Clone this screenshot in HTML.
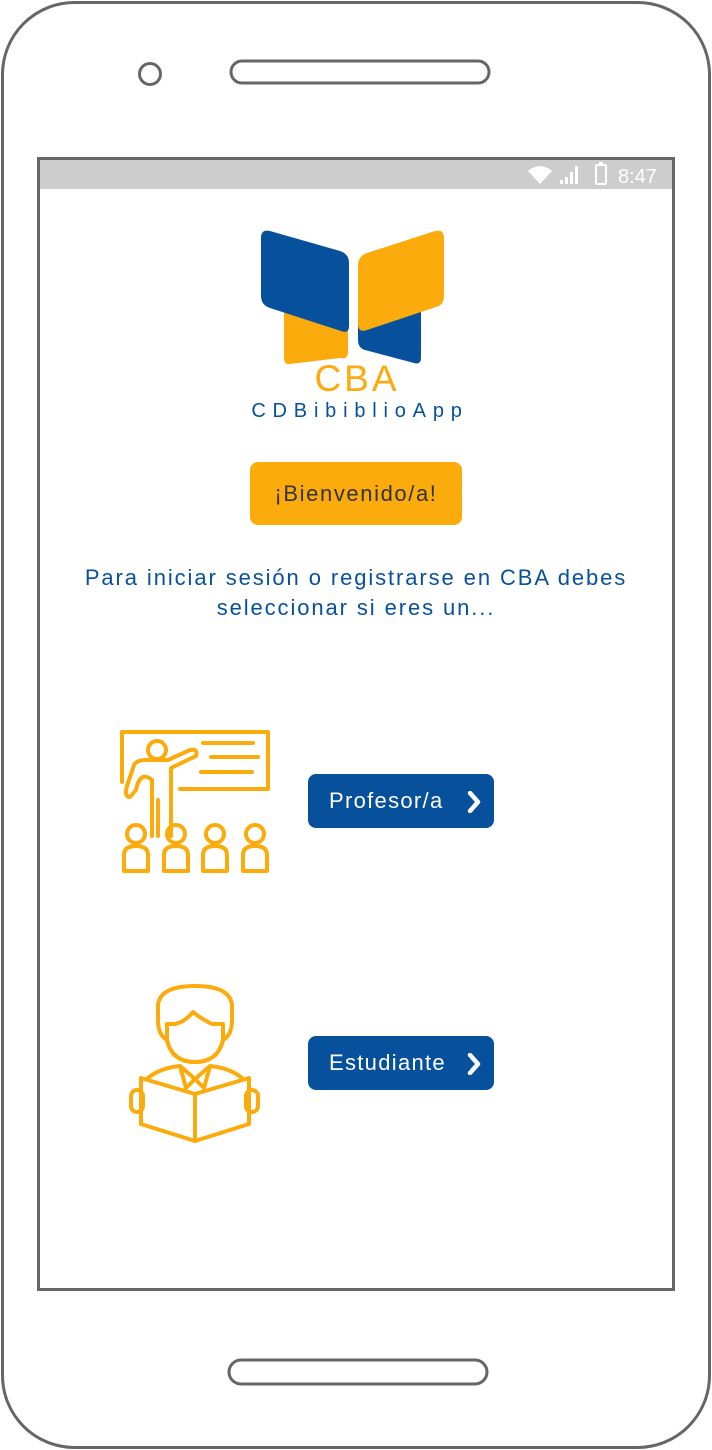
<!DOCTYPE html>
<html><head><meta charset="utf-8"><style>
body{margin:0;width:712px;height:1450px;background:#fff;position:relative;overflow:hidden;font-family:"Liberation Sans",sans-serif}
.abs{position:absolute}
.btn{position:absolute;background:#07509c;color:#fff;border-radius:8px;font-size:22px;line-height:54px;padding-left:21px;box-sizing:border-box;letter-spacing:1.3px}
.btn svg{position:absolute;right:10px;top:17px}
</style></head><body>
<svg class="abs" style="left:0;top:0" width="712" height="1450">
<rect x="2.5" y="2.5" width="707" height="1445" rx="72" fill="none" stroke="#666" stroke-width="3"/>
<circle cx="150" cy="74" r="10.5" fill="none" stroke="#666" stroke-width="3"/>
<rect x="231" y="61" width="258" height="22" rx="11" fill="none" stroke="#666" stroke-width="3"/>
<rect x="229" y="1360" width="258" height="24" rx="12" fill="none" stroke="#666" stroke-width="3"/>
<rect x="38.5" y="158.5" width="635" height="1131" fill="none" stroke="#666" stroke-width="3"/>
<rect x="40" y="160" width="632" height="29" fill="#cdcdcd"/>
<path d="M528 171 Q540 161 552 171 L540 184Z" fill="#fff"/>
<rect x="560" y="180" width="3" height="4" fill="#fff"/><rect x="565" y="177" width="3" height="7" fill="#fff"/><rect x="570" y="172" width="3" height="12" fill="#fff"/><rect x="575" y="166" width="3" height="18" fill="#fff"/>
<rect x="596" y="165" width="10" height="19" rx="1" fill="none" stroke="#fff" stroke-width="2"/><rect x="599" y="162" width="4" height="3" fill="#fff"/>
<text x="618" y="183" font-size="20" fill="#fff" font-family="Liberation Sans">8:47</text>
<path d="M284 300 L348 318 L348 352 Q348 360 340 358 L290 364 Q284 365 284 358Z" fill="#fbab0b"/>
<path d="M358 320 L421 304 L421 358 Q421 365 414 363 L365 350 Q358 348 358 340Z" fill="#07509c"/>
<path d="M261 238 Q261 229 270 231 L340 251 Q349 254 349 263 L349 326 Q349 334 341 331 L270 308 Q261 305 261 296Z" fill="#07509c"/>
<path d="M358 266 Q358 256 367 253 L435 231 Q444 229 444 238 L444 296 Q444 305 436 307 L367 330 Q358 333 358 324Z" fill="#fbab0b"/>
<text x="357" y="391" text-anchor="middle" font-size="37" fill="#fbab0b" font-family="Liberation Sans" letter-spacing="3">CBA</text>
<text x="360" y="417" text-anchor="middle" font-size="20" fill="#07509c" font-family="Liberation Sans" letter-spacing="6.8">CDBibiblioApp</text>
<g fill="none" stroke="#fbab0b" stroke-width="4" stroke-linejoin="round" stroke-linecap="round">
<path d="M122 782 L122 732 L268 732 L268 789 L180 789"/>
<path d="M203 743 L253 743 M211 757 L258 757 M201 772 L252 772"/>
<circle cx="157" cy="750" r="9"/>
<path d="M152 836 L152 780 Q140 770 136 790 L130 797 Q124 797 127 786 L134 765 Q137 760 145 760 L168 760 L190 750 Q198 748 196 756 L171 768 L171 836"/>
<path d="M158 800 L158 836"/>
<circle cx="136" cy="834" r="9"/><path d="M124 871 L124 855 Q124 846 136 846 Q148 846 148 855 L148 871Z"/>
<circle cx="176" cy="834" r="9"/><path d="M164 871 L164 855 Q164 846 176 846 Q188 846 188 855 L188 871Z"/>
<circle cx="215" cy="834" r="9"/><path d="M203 871 L203 855 Q203 846 215 846 Q227 846 227 855 L227 871Z"/>
<circle cx="255" cy="834" r="9"/><path d="M243 871 L243 855 Q243 846 255 846 Q267 846 267 855 L267 871Z"/>
</g>
<g fill="none" stroke="#fbab0b" stroke-width="4" stroke-linejoin="round" stroke-linecap="round">
<path d="M167 1040 Q158 1035 158 1020 L158 1005 Q160 986 195 986 Q230 986 232 1005 L232 1020 Q232 1035 223 1040"/>
<path d="M167 1024 L167 1040 Q172 1062 195 1062 Q218 1062 223 1040 L223 1024 L212 1024 Q200 1018 193 1012 Q185 1022 175 1024Z"/>
<path d="M148 1078 Q160 1068 180 1066 L195 1079 L210 1066 Q230 1068 242 1078"/>
<path d="M180 1066 L186 1088 L195 1079 L204 1088 L210 1066"/>
<path d="M141 1078 L195 1094 L249 1078 L249 1124 L195 1141 L141 1124Z"/>
<path d="M195 1094 L195 1141"/>
<rect x="131" y="1090" width="12" height="22" rx="6"/><rect x="246" y="1090" width="12" height="22" rx="6"/>
</g>
</svg>
<div class="abs" style="left:250px;top:462px;width:212px;height:63px;background:#fbab0b;border-radius:8px;color:#333;font-size:22px;line-height:63px;text-align:center;letter-spacing:1.6px">¡Bienvenido/a!</div>
<div class="abs" style="left:30px;top:563px;width:652px;text-align:center;color:#07509c;font-size:22px;line-height:30px;letter-spacing:1.9px">Para iniciar sesión o registrarse en CBA debes<br>seleccionar si eres un...</div>
<div class="btn" style="left:308px;top:774px;width:186px">Profesor/a<svg width="20" height="22"><path d="M6 2 L14 11 L6 20" fill="none" stroke="#fff" stroke-width="4.5" stroke-linecap="round" stroke-linejoin="round"/></svg></div>
<div class="btn" style="left:308px;top:1036px;width:186px">Estudiante<svg width="20" height="22"><path d="M6 2 L14 11 L6 20" fill="none" stroke="#fff" stroke-width="4.5" stroke-linecap="round" stroke-linejoin="round"/></svg></div>
</body></html>
